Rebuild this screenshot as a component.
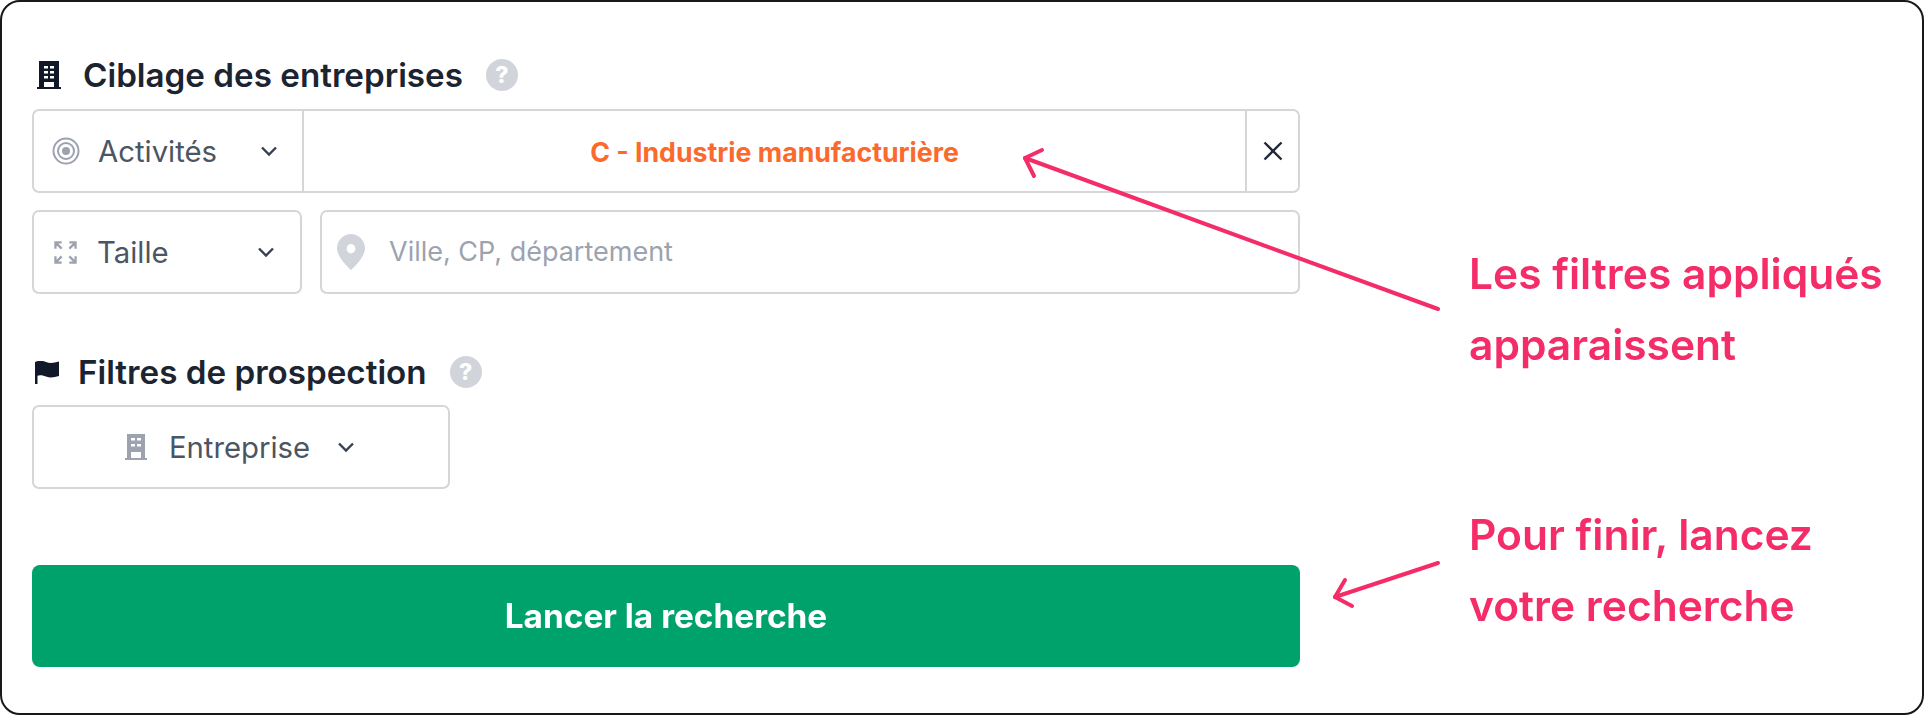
<div class="card">
  <div class="form">
    <div class="heading first">
      <svg class="hicon" width="24" height="30" viewBox="0 0 24 30">
        <path fill="#111827" fill-rule="evenodd" d="M2 1h20v26h2v2H0v-2h2zM7 6v2.500h4V6zm6 0v2.500h4V6zM7 11v2.500h4V11zm6 0v2.500h4V11zM7 16v2.500h4V16zm6 0v2.500h4V16zM7 22v5h10v-5z"/>
      </svg>
      <span class="title t1">Ciblage des entreprises</span>
      <span class="help">?</span>
    </div>

    <div class="field row-one">
      <div class="select activity">
        <svg class="sicon" width="28" height="28" viewBox="0 0 28 28" fill="none" stroke="#9ca3af" stroke-width="2">
          <circle cx="14" cy="14" r="12.5"/>
          <circle cx="14" cy="14" r="8"/>
          <circle cx="14" cy="14" r="4" fill="#9ca3af" stroke="none"/>
        </svg>
        <span class="label">Activités</span>
        <svg class="chev" width="18" height="12" viewBox="0 0 18 12"><path d="M2 2.500l7 7 7-7" fill="none" stroke="#374151" stroke-width="2.400"/></svg>
      </div>
      <div class="value">C - Industrie manufacturière</div>
      <div class="clear">
        <svg width="22" height="22" viewBox="0 0 22 22"><path d="M2.500 2.500l17 17M19.500 2.500l-17 17" stroke="#1f2937" stroke-width="2.400" fill="none"/></svg>
      </div>
    </div>

    <div class="row-two">
      <div class="field select size">
        <svg class="sicon" width="23" height="23" viewBox="0 0 24 24" fill="none" stroke="#9ca3af" stroke-width="2.400">
          <path d="M1.500 8V1.500H8M16 1.500h6.500V8M22.500 16v6.500H16M8 22.500H1.500V16M2 2l6 6M22 2l-6 6M22 22l-6-6M2 22l6-6"/>
        </svg>
        <span class="label">Taille</span>
        <svg class="chev" width="18" height="12" viewBox="0 0 18 12"><path d="M2 2.500l7 7 7-7" fill="none" stroke="#374151" stroke-width="2.400"/></svg>
      </div>
      <div class="field place">
        <svg width="28" height="36" viewBox="0 0 30 36" preserveAspectRatio="none">
          <path fill="#d1d5db" fill-rule="evenodd" d="M15 0c8.300 0 15 6.500 15 14.500C30 24 15 36 15 36S0 24 0 14.500C0 6.500 6.700 0 15 0zm0 10a4.700 4.700 0 1 0 0 9.400 4.700 4.700 0 0 0 0-9.400z"/>
        </svg>
        <span class="placeholder">Ville, CP, département</span>
      </div>
    </div>

    <div class="heading second">
      <svg class="hicon flag" width="24" height="23" viewBox="0 0 24 23">
        <path fill="#111827" d="M0 1c4-1.500 7-1.500 11 0s8 1 13-.5V15c-5 1.500-9 2-13 .5S4 14 2.500 14.800V23H0z"/>
      </svg>
      <span class="title t2">Filtres de prospection</span>
      <span class="help">?</span>
    </div>

    <div class="field select company">
      <svg width="22" height="26" viewBox="0 0 22 26">
        <path fill="#9ca3af" fill-rule="evenodd" d="M2 0h18v24h2v2H0v-2h2zM6 4v2.500h4V4zm6 0v2.500h4V4zM6 10v2.500h4V10zm6 0v2.500h4V10zm-6 8v6h10v-6z"/>
      </svg>
      <span class="label">Entreprise</span>
      <svg class="chev" width="18" height="12" viewBox="0 0 18 12"><path d="M2 2.500l7 7 7-7" fill="none" stroke="#374151" stroke-width="2.400"/></svg>
    </div>

    <button class="launch" type="button">Lancer la recherche</button>
  </div>

  <div class="notes">
    <p class="note">Les filtres appliqués<br />apparaissent</p>
    <p class="note second-note">Pour finir, lancez<br />votre recherche</p>
  </div>

  <svg class="arrows" width="1924" height="715" viewBox="0 0 1924 715" fill="none" stroke="#f42c67" stroke-width="4" stroke-linecap="round" stroke-linejoin="round">
    <path d="M1438 309L1025 158"/>
    <path d="M1042 150L1025 158L1034 176"/>
    <path d="M1438 563L1335 597"/>
    <path d="M1345 580L1335 597L1352 606"/>
  </svg>
</div>

<style>
  :global(body) {
    margin: 0;
    background: #fff;
  }
  .card {
    position: relative;
    box-sizing: border-box;
    width: 1924px;
    height: 715px;
    display: flex;
    border: 2px solid #17181a;
    border-radius: 20px;
    background: #fff;
    padding: 0 0 0 30px;
    font-family: Inter, "Liberation Sans", sans-serif;
    overflow: hidden;
    filter: blur(0.45px);
  }
  .form {
    width: 1268px;
    flex: none;
    display: flex;
    flex-direction: column;
  }
  .heading {
    display: flex;
    align-items: center;
    height: 36px;
  }
  .heading.first {
    margin-top: 55px;
    margin-bottom: 16px;
    padding-left: 5px;
  }
  .heading.second {
    margin-top: 60px;
    margin-bottom: 15px;
    padding-left: 3px;
  }
  .title {
    font-size: 33.200px;
    font-weight: 600;
    color: #1b2430;
    white-space: nowrap;
  }
  .t1 {
    margin-left: 22px;
  }
  .t2 {
    margin-left: 19px;
  }
  .help {
    width: 32px;
    height: 32px;
    margin-left: 23px;
    border-radius: 50%;
    background: #d1d5db;
    color: #fff;
    font-size: 23px;
    font-weight: 800;
    display: flex;
    align-items: center;
    justify-content: center;
  }
  .field {
    box-sizing: border-box;
    border: 2px solid #d4d6da;
    border-radius: 7px;
    background: #fff;
    height: 84px;
  }
  .row-one {
    display: flex;
    width: 100%;
  }
  .select {
    display: flex;
    align-items: center;
    box-sizing: border-box;
  }
  .activity {
    width: 270px;
    flex: none;
    padding: 0 24px 0 18px;
    border-right: 2px solid #d4d6da;
  }
  .label {
    font-size: 29.300px;
    color: #4b5563;
    margin-left: 18px;
    flex: 1;
  }
  .value {
    flex: 1;
    display: flex;
    align-items: center;
    justify-content: center;
    color: #fb6a2c;
    font-size: 26.700px;
    font-weight: 700;
    padding-top: 1px;
  }
  .clear {
    box-sizing: border-box;
    width: 53px;
    flex: none;
    border-left: 2px solid #d4d6da;
    display: flex;
    align-items: center;
    justify-content: center;
  }
  .row-two {
    display: flex;
    gap: 18px;
    margin-top: 17px;
  }
  .size {
    width: 270px;
    flex: none;
    padding: 0 25px 0 20px;
  }
  .size .label {
    margin-left: 20px;
  }
  .place {
    flex: 1;
    display: flex;
    align-items: center;
    padding-left: 15px;
  }
  .placeholder {
    font-size: 27px;
    color: #9ca3af;
    margin-left: 24px;
    padding-bottom: 2px;
  }
  .company {
    width: 418px;
    justify-content: center;
    padding-right: 2px;
  }
  .company .label {
    flex: none;
    margin: 0 0 0 22px;
  }
  .company .chev {
    margin-left: 27px;
  }
  .launch {
    height: 102px;
    margin-top: 76px;
    width: 100%;
    border: none;
    border-radius: 8px;
    background: #00a26b;
    color: #fff;
    font-family: inherit;
    font-size: 33.400px;
    font-weight: 700;
  }
  .notes {
    margin-left: 169px;
    display: flex;
    flex-direction: column;
  }
  .note {
    margin: 0;
    color: #f42c67;
    font-size: 42.500px;
    font-weight: 600;
    line-height: 71px;
    white-space: nowrap;
  }
  .notes .note:first-child {
    margin-top: 236px;
  }
  .second-note {
    margin-top: 119px;
  }
  .arrows {
    position: absolute;
    left: -2px;
    top: -2px;
    pointer-events: none;
  }
</style>
